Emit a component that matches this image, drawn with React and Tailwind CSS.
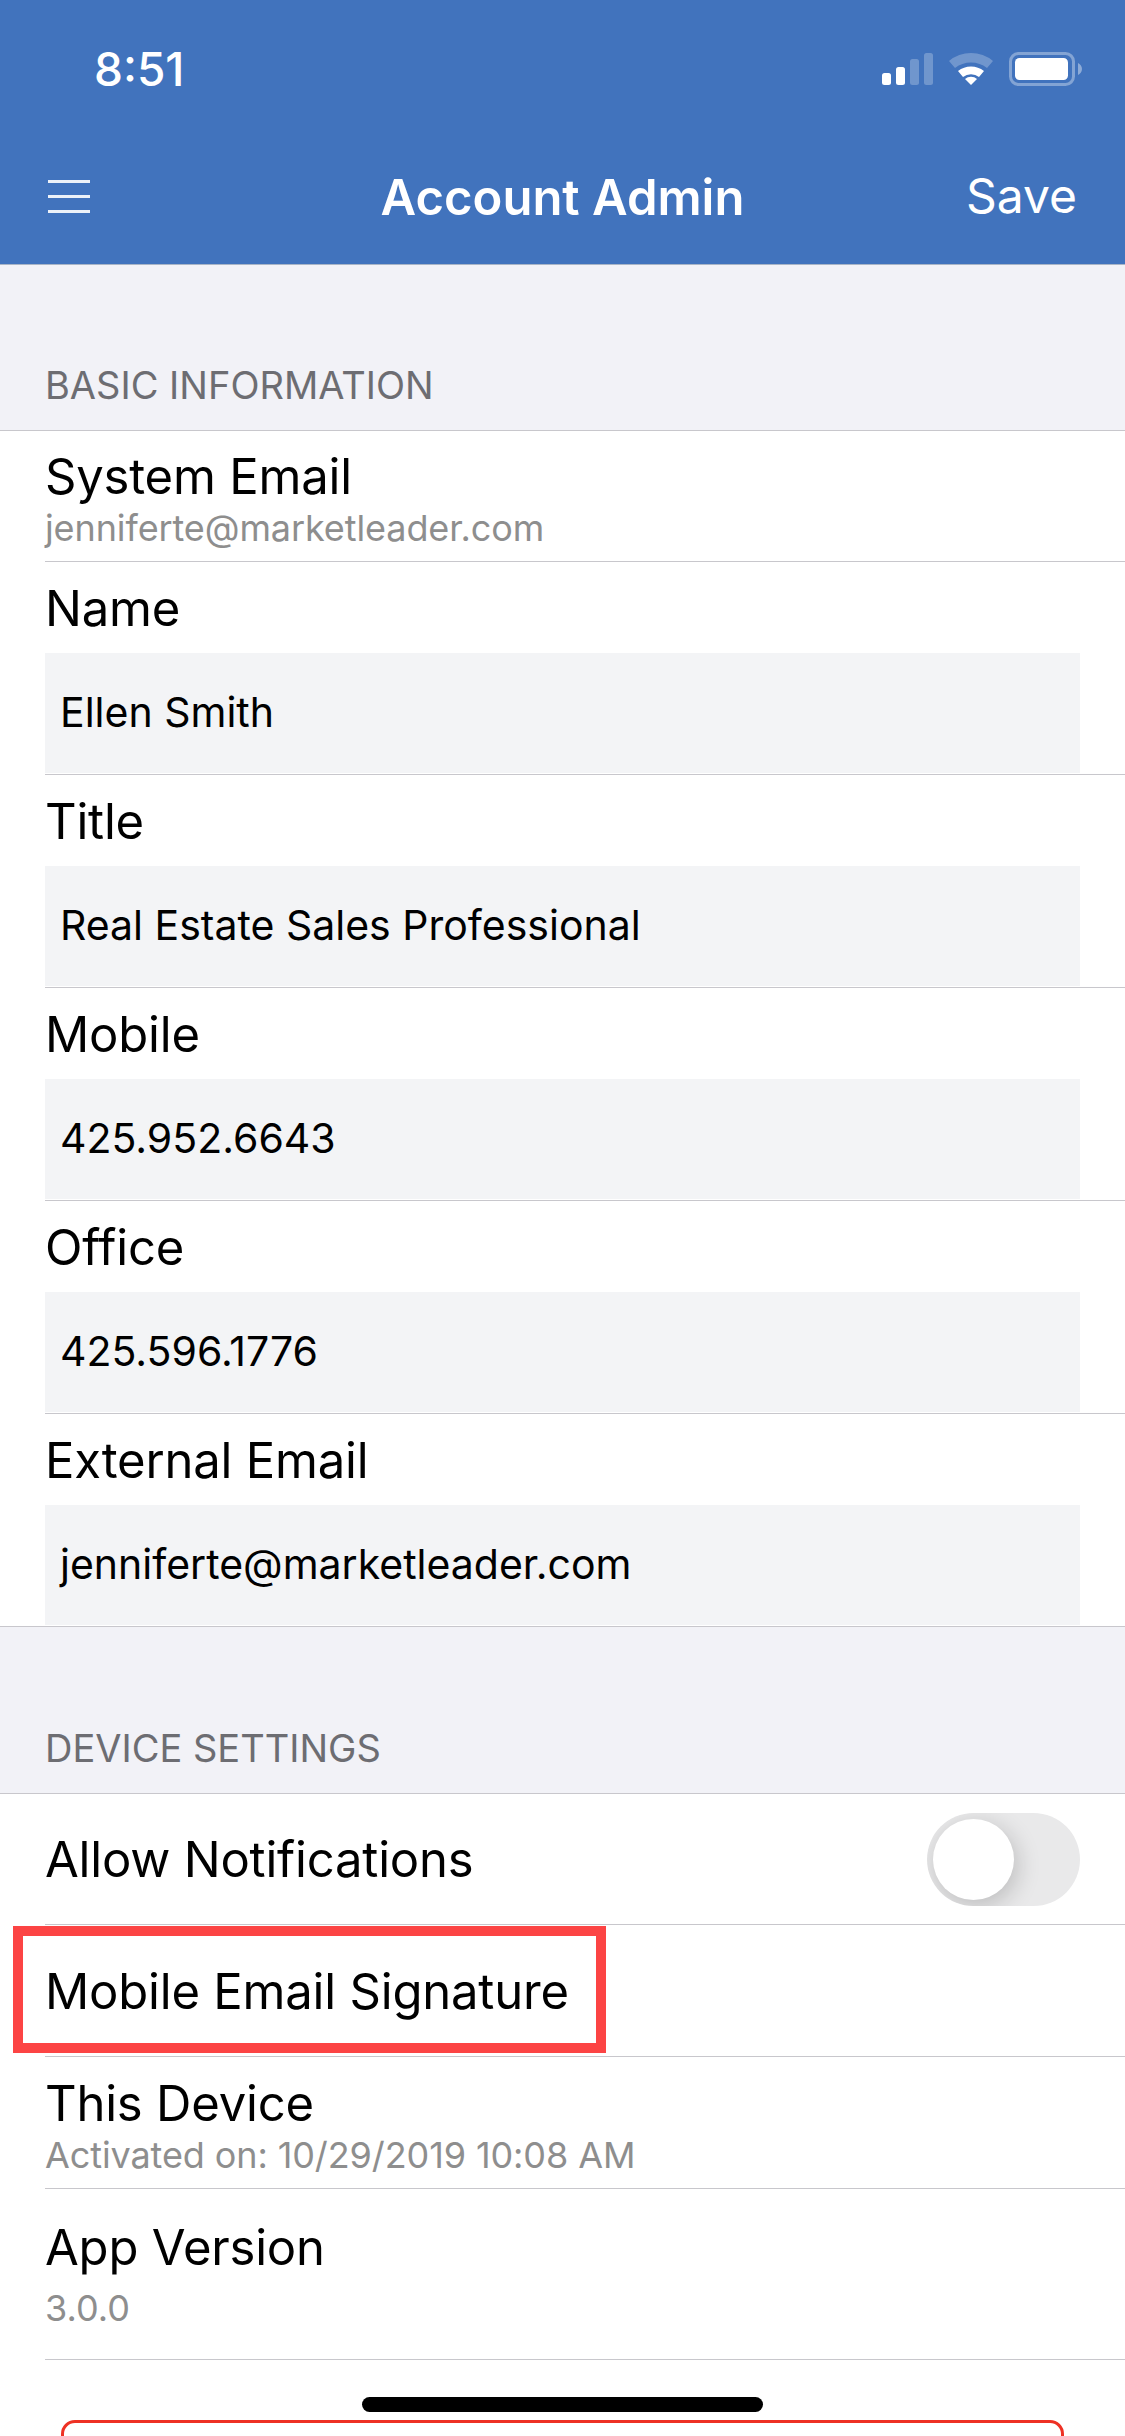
const font = { fontFamily: "Inter, sans-serif" };

const StatusBar = () => (
  <div className="h-[132px] flex justify-between">
    <span className="ml-[94px] mt-[44px] text-[46px] leading-[50px] font-medium text-white">8:51</span>
    <svg className="mt-[52px] mr-[43px]" width="200" height="36" viewBox="0 0 200 36" fill="#fff">
      <rect x="0" y="21" width="9" height="12" rx="2.5" />
      <rect x="14" y="15" width="9" height="18" rx="2.5" />
      <rect x="28" y="7" width="9" height="26" rx="2.5" opacity="0.25" />
      <rect x="42" y="1" width="9" height="32" rx="2.5" opacity="0.25" />
      <path d="M67 9 A34 34 0 0 1 111 9 L105 16 A26 26 0 0 0 73 16 Z" opacity="0.25" />
      <path d="M76 19 A21 21 0 0 1 102 19 L97 25 A13 13 0 0 0 81 25 Z" />
      <path d="M83 27 A9 9 0 0 1 95 27 L89 33 Z" />
      <rect x="128.500" y="1.500" width="63" height="31" rx="8" fill="none" stroke="#fff" strokeWidth="3" opacity="0.35" />
      <rect x="133" y="6" width="53" height="22" rx="4.500" />
      <path d="M196 11 C198 12 200 14 200 17 C200 20 198 22 196 23 Z" opacity="0.4" />
    </svg>
  </div>
);

const NavBar = () => (
  <div className="h-[133px] relative flex items-center justify-between pl-[48px] pr-[48px] pb-[4px] border-b border-[#a9b5c7]">
    <div className="flex flex-col gap-[12px] w-[42px]">
      <div className="h-[3px] bg-white/90" />
      <div className="h-[3px] bg-white/90" />
      <div className="h-[3px] bg-white/90" />
    </div>
    <span className="absolute left-0 right-0 top-[36px] text-center text-[49px] leading-[60px] font-semibold text-white">Account Admin</span>
    <span className="text-[48px] leading-[60px] text-white">Save</span>
  </div>
);

const SectionHeader = ({ title, height }) => (
  <div className={`${height} flex items-end pl-[45px] pb-[22px] border-b border-[#c8c7cc]`}>
    <span className="text-[38px] leading-[46px] text-[#6d6d72]">{title}</span>
  </div>
);

const InputRow = ({ label, value, last }) => (
  <div className={`pt-[17px] ${last ? "h-[212px] pl-[45px] pr-[45px]" : "h-[213px] ml-[45px] border-b border-[#c8c7cc]"}`}>
    <div className="text-[49px] leading-[60px] tracking-[-0.2px] text-black">{label}</div>
    <div className={`mt-[14px] h-[120px] bg-[#f3f4f6] flex items-center pl-[15px] pb-[1px] text-[41px] text-black ${last ? "" : "mr-[45px]"}`}>
      {value}
    </div>
  </div>
);

const DetailRow = ({ label, value, height, top }) => (
  <div className={`${height} ${top} ml-[45px] border-b border-[#c8c7cc]`}>
    <div className="text-[49px] leading-[60px] tracking-[-0.2px] text-black">{label}</div>
    <div className="text-[36px] leading-[42px] tracking-[-0.1px] text-[#8e8e8e]">{value}</div>
  </div>
);

const fields = [
  ["Name", "Ellen Smith"],
  ["Title", "Real Estate Sales Professional"],
  ["Mobile", "425.952.6643"],
  ["Office", "425.596.1776"],
  ["External Email", "jenniferte@marketleader.com"],
];

export default function App() {
  return (
    <div className="w-[1125px] h-[2436px] bg-white relative overflow-hidden" style={font}>
      <div className="bg-[#4173bd]">
        <StatusBar />
        <NavBar />
      </div>

      <div className="bg-[#f2f2f7]">
        <SectionHeader title="BASIC INFORMATION" height="h-[166px]" />
      </div>

      <DetailRow label="System Email" value="jenniferte@marketleader.com" height="h-[131px]" top="pt-[16px]" />
      {fields.map(([label, value], i) => (
        <InputRow key={label} label={label} value={value} last={i === fields.length - 1} />
      ))}

      <div className="bg-[#f2f2f7] border-t border-[#c8c7cc]">
        <SectionHeader title="DEVICE SETTINGS" height="h-[167px]" />
      </div>

      <div className="h-[131px] ml-[45px] border-b border-[#c8c7cc] flex items-center justify-between pr-[45px]">
        <span className="mt-[2px] text-[49px] tracking-[-0.2px] text-black">Allow Notifications</span>
        <div className="w-[153px] h-[93px] rounded-full bg-[#e9e9ea] p-[6px] overflow-hidden">
          <div className="w-[81px] h-[81px] rounded-full bg-white shadow-[3px_6px_24px_rgba(0,0,0,0.2)]" />
        </div>
      </div>

      <div className="h-[132px] ml-[45px] border-b border-[#c8c7cc] flex items-center relative">
        <span className="mt-[2px] text-[49px] tracking-[-0.2px] text-black">Mobile Email Signature</span>
        <div className="absolute left-[-32px] top-[1px] w-[593px] h-[127px] border-[10px] border-[#fc4444]" />
      </div>

      <DetailRow label="This Device" value="Activated on: 10/29/2019 10:08 AM" height="h-[132px]" top="pt-[17px]" />

      <div className="h-[171px] ml-[45px] border-b border-[#c8c7cc] pt-[29px]">
        <div className="text-[49px] leading-[60px] tracking-[-0.2px] text-black">App Version</div>
        <div className="mt-[7px] text-[36px] leading-[46px] text-[#8e8e8e]">3.0.0</div>
      </div>

      <div className="mt-[60px] mx-[61px] h-[60px] border-[3px] border-[#ee3124] rounded-[14px]" />

      <div className="absolute left-[362px] top-[2397px] w-[401px] h-[15px] rounded-full bg-black" />
    </div>
  );
}
